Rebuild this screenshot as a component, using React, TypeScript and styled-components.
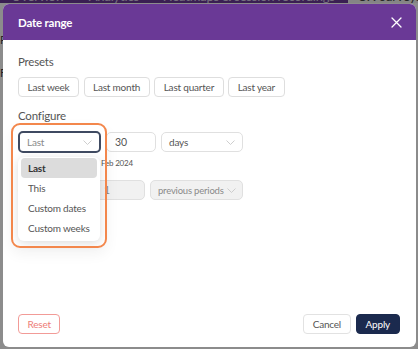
import React from "react";
import styled, { createGlobalStyle } from "styled-components";

const Global = createGlobalStyle`
  html, body { margin: 0; padding: 0; width: 418px; height: 349px; overflow: hidden; background: #fff; }
  body { font-family: Lato, "Open Sans", "Liberation Sans", sans-serif; letter-spacing: -0.2px; }
  * { box-sizing: border-box; }
  button { letter-spacing: inherit; }
`;

const Page = styled.div`
  position: relative;
  width: 418px;
  height: 349px;
  overflow: hidden;
  background: #fff;
`;

const NavBar = styled.nav`
  display: flex;
  align-items: flex-end;
  height: 14px;
  margin-top: -11px;
  gap: 2px;
  background: #6a3a96;
  font-size: 13px;
`;

const NavTab = styled.span<{ $active?: boolean }>`
  line-height: 14px;
  padding: ${(p) => (p.$active ? "0 10px" : "0 11px")};
  background: ${(p) => (p.$active ? "#f3f3f3" : "transparent")};
  color: ${(p) => (p.$active ? "#444" : "#d8cce6")};
  white-space: nowrap;
`;

const PageBody = styled.div`
  display: flex;
  flex-direction: column;
  gap: 20px;
  padding: 30px 0 0 0;
  font-size: 11px;
  color: #444;
`;

const Overlay = styled.div`
  position: absolute;
  inset: 0;
  display: flex;
  padding: 4px 2px 2px 3px;
  background: rgba(0, 0, 0, 0.45);
`;

const Modal = styled.div`
  position: relative;
  flex: 1;
  display: flex;
  flex-direction: column;
  background: #fff;
  border-radius: 6px;
`;

const Header = styled.div`
  display: flex;
  align-items: center;
  justify-content: space-between;
  height: 36px;
  padding: 0 14px 0 15px;
  background: #6a3996;
  border-radius: 6px 6px 0 0;
`;

const Title = styled.h2`
  margin: 0;
  font-size: 11.5px;
  font-weight: 700;
  color: #fff;
  letter-spacing: -0.2px;
`;

const CloseButton = styled.button`
  display: flex;
  padding: 0;
  border: 0;
  background: none;
  cursor: pointer;
`;

const Body = styled.div`
  flex: 1;
  display: flex;
  flex-direction: column;
  padding: 14px 15px 0;
`;

const SectionLabel = styled.div<{ $top?: number }>`
  margin-top: ${(p) => p.$top ?? 0}px;
  font-size: 11.5px;
  line-height: 16px;
  color: #555;
`;

const ButtonRow = styled.div`
  display: flex;
  gap: 4.5px;
  margin-top: 7px;
`;

const PresetButton = styled.button`
  height: 20px;
  padding: 0 8.5px;
  border: 1px solid #dedede;
  border-radius: 4px;
  background: #fff;
  font-family: inherit;
  font-size: 10px;
  color: #555;
  white-space: nowrap;
`;

const ConfigArea = styled.div`
  position: relative;
  margin-top: 7px;
`;

const FieldRow = styled.div`
  display: flex;
  align-items: center;
  gap: 5px;
`;

const SelectBox = styled.div<{ $w: number; $focus?: boolean; $disabled?: boolean; $fs?: number }>`
  display: flex;
  align-items: center;
  justify-content: space-between;
  gap: 3px;
  width: ${(p) => p.$w}px;
  height: ${(p) => (p.$focus ? 22 : 20)}px;
  padding: 0 7px;
  border: ${(p) => (p.$focus ? "2px solid #3f4a61" : "1px solid #e0e0e0")};
  border-radius: 5px;
  background: ${(p) => (p.$disabled ? "#f1f1f1" : "#fff")};
  font-size: ${(p) => p.$fs ?? 10}px;
  white-space: nowrap;
  overflow: hidden;
  color: ${(p) => (p.$focus || p.$disabled ? "#8a8a8a" : "#555")};
`;

const InputBox = styled.div<{ $w: number; $disabled?: boolean }>`
  display: flex;
  align-items: center;
  width: ${(p) => p.$w}px;
  height: 20px;
  padding: 0 8px;
  border: 1px solid #e0e0e0;
  border-radius: 5px;
  background: ${(p) => (p.$disabled ? "#f1f1f1" : "#fff")};
  font-size: 10.5px;
  color: ${(p) => (p.$disabled ? "#888" : "#555")};
`;

const DateHint = styled.div`
  display: flex;
  gap: 3px;
  margin: 5px 0 0;
  font-size: 8px;
  line-height: 10px;
  color: #555;
  white-space: nowrap;
`;

const HintStart = styled.span`
  width: 80px;
  overflow: hidden;
  text-align: right;
`;

const CompareRow = styled(FieldRow)`
  margin-top: 12px;
`;

const CompareLabel = styled.span`
  width: 72px;
  font-size: 10px;
  color: #555;
  white-space: nowrap;
`;

const Menu = styled.ul`
  position: absolute;
  top: 26px;
  left: 0;
  width: 82px;
  margin: 0;
  padding: 1px 3px 3px;
  list-style: none;
  background: #fff;
  border-radius: 6px;
  box-shadow: 0 2px 10px rgba(0, 0, 0, 0.14);
`;

const MenuItem = styled.li<{ $active?: boolean }>`
  display: flex;
  align-items: center;
  height: 20px;
  padding: 0 7px;
  border-radius: 4px;
  background: ${(p) => (p.$active ? "#dcdcdc" : "transparent")};
  font-size: 10px;
  white-space: nowrap;
  font-weight: ${(p) => (p.$active ? 700 : 400)};
  color: ${(p) => (p.$active ? "#333" : "#555")};
`;

const Highlight = styled.div`
  position: absolute;
  top: -8px;
  left: -7px;
  width: 96px;
  height: 125px;
  border: 2px solid #f3874c;
  border-radius: 9px;
  pointer-events: none;
  box-shadow: 0 6px 14px rgba(0, 0, 0, 0.05);
`;

const Footer = styled.div`
  display: flex;
  align-items: center;
  gap: 5px;
  padding: 0 16px 13px 15px;
`;

const Spacer = styled.div`
  flex: 1;
`;

const FooterButton = styled.button<{ $variant: "danger" | "ghost" | "primary" }>`
  height: 20px;
  padding: 0 ${(p) => (p.$variant === "primary" ? 9 : 8.5)}px;
  border-radius: 4px;
  font-family: inherit;
  font-size: 10px;
  border: 1px solid
    ${(p) => (p.$variant === "danger" ? "#f29b97" : p.$variant === "ghost" ? "#e2e2e2" : "#1b2a4e")};
  background: ${(p) => (p.$variant === "primary" ? "#1b2a4e" : "#fff")};
  color: ${(p) => (p.$variant === "danger" ? "#ee7d77" : p.$variant === "ghost" ? "#555" : "#fff")};
`;

const Chevron = () => (
  <svg width="9" height="5" viewBox="0 0 9 5" fill="none" style={{ flex: "none" }}>
    <path d="M0.5 0.5 L4.5 4.5 L8.5 0.5" stroke="#c8c8c8" strokeWidth="0.9" />
  </svg>
);

const CloseIcon = () => (
  <svg width="11" height="11" viewBox="0 0 11 11" fill="none">
    <path d="M1 1 L10 10 M10 1 L1 10" stroke="#fff" strokeWidth="1.3" strokeLinecap="round" />
  </svg>
);

export default function App() {
  const presets = ["Last week", "Last month", "Last quarter", "Last year"];
  const options = ["Last", "This", "Custom dates", "Custom weeks"];
  return (
    <Page>
      <Global />
      <NavBar>
        <NavTab>Overview</NavTab>
        <NavTab>Analytics</NavTab>
        <NavTab>Heatmaps &amp; session recordings</NavTab>
        <NavTab $active>UX-surveys</NavTab>
      </NavBar>
      <PageBody>
        <span>Period</span>
        <span>Filters</span>
      </PageBody>
      <Overlay>
        <Modal>
          <Header>
            <Title>Date range</Title>
            <CloseButton aria-label="Close">
              <CloseIcon />
            </CloseButton>
          </Header>
          <Body>
            <SectionLabel>Presets</SectionLabel>
            <ButtonRow>
              {presets.map((p) => (
                <PresetButton key={p}>{p}</PresetButton>
              ))}
            </ButtonRow>
            <SectionLabel $top={11}>Configure</SectionLabel>
            <ConfigArea>
              <FieldRow>
                <SelectBox $w={83} $focus>
                  <span>Last</span>
                  <Chevron />
                </SelectBox>
                <InputBox $w={50}>30</InputBox>
                <SelectBox $w={82}>
                  <span>days</span>
                  <Chevron />
                </SelectBox>
              </FieldRow>
              <DateHint>
                <HintStart>6 Jan 2024 – 5</HintStart>
                <span>Feb 2024</span>
              </DateHint>
              <CompareRow>
                <CompareLabel>Compare with</CompareLabel>
                <InputBox $w={50} $disabled>1</InputBox>
                <SelectBox $w={93} $disabled $fs={9.5}>
                  <span>previous periods</span>
                  <Chevron />
                </SelectBox>
              </CompareRow>
              <Menu>
                {options.map((o, i) => (
                  <MenuItem key={o} $active={i === 0}>
                    {o}
                  </MenuItem>
                ))}
              </Menu>
              <Highlight />
            </ConfigArea>
          </Body>
          <Footer>
            <FooterButton $variant="danger">Reset</FooterButton>
            <Spacer />
            <FooterButton $variant="ghost">Cancel</FooterButton>
            <FooterButton $variant="primary">Apply</FooterButton>
          </Footer>
        </Modal>
      </Overlay>
    </Page>
  );
}
